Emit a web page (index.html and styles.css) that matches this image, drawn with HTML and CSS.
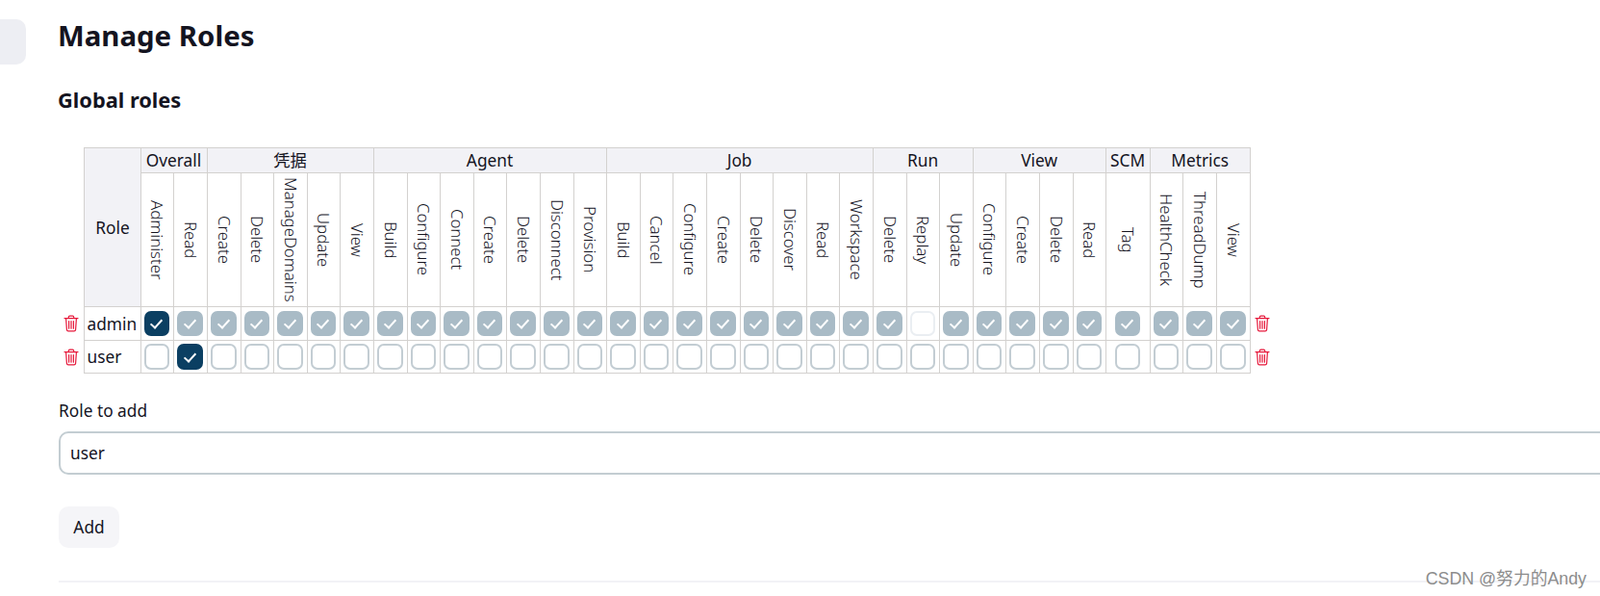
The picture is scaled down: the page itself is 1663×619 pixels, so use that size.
FILE: index.html
```html
<!DOCTYPE html>
<html lang="en">
<head>
<meta charset="utf-8">
<title>Manage Roles</title>
<link rel="stylesheet" href="styles.css">
</head>
<body>
<div class="page">
  <aside class="side"><div class="side-item"></div></aside>
  <main class="main">
    <h1 class="title">Manage Roles</h1>
    <h2 class="sub">Global roles</h2>
    <svg width="0" height="0" class="defs"><defs>
      <symbol id="trash" viewBox="0 0 16 18"><path d="M1 3.6h14M5.3 3.4V2.3c0-.7.5-1.2 1.2-1.2h3c.7 0 1.2.5 1.2 1.2v1.1M2.6 3.8l.8 11.6c.1.9.7 1.5 1.6 1.5h6c.9 0 1.5-.6 1.6-1.5l.8-11.6M5.6 6.6v7.6M8 6.6v7.6M10.4 6.6v7.6" fill="none" stroke="currentColor" stroke-width="1.2" stroke-linecap="round" stroke-linejoin="round"/></symbol>
    </defs></svg>
    <table class="roles">
      <colgroup>
        <col class="c-del"><col class="c-role">
        <col class="a"><col class="b">
        <col class="b"><col class="a"><col class="b"><col class="a"><col class="b">
        <col class="b"><col class="a"><col class="b"><col class="a"><col class="b"><col class="b"><col class="a">
        <col class="b"><col class="a"><col class="b"><col class="b"><col class="a"><col class="b"><col class="a"><col class="b">
        <col class="b"><col class="a"><col class="b">
        <col class="a"><col class="b"><col class="b"><col class="a">
        <col class="c-scm">
        <col class="a"><col class="b"><col class="b">
        <col class="c-del">
      </colgroup>
      <thead>
        <tr class="r-group">
          <td class="none" rowspan="2"></td>
          <th class="role-h" rowspan="2">Role</th>
          <th colspan="2">Overall</th><th colspan="5">凭据</th><th colspan="7">Agent</th><th colspan="8">Job</th><th colspan="3">Run</th><th colspan="4">View</th><th>SCM</th><th colspan="3">Metrics</th>
          <td class="none" rowspan="2"></td>
        </tr>
        <tr class="r-perm">
          <td><span class="v">Administer</span></td><td><span class="v">Read</span></td>
          <td><span class="v">Create</span></td><td><span class="v">Delete</span></td><td><span class="v">ManageDomains</span></td><td><span class="v">Update</span></td><td><span class="v">View</span></td>
          <td><span class="v">Build</span></td><td><span class="v">Configure</span></td><td><span class="v">Connect</span></td><td><span class="v">Create</span></td><td><span class="v">Delete</span></td><td><span class="v">Disconnect</span></td><td><span class="v">Provision</span></td>
          <td><span class="v">Build</span></td><td><span class="v">Cancel</span></td><td><span class="v">Configure</span></td><td><span class="v">Create</span></td><td><span class="v">Delete</span></td><td><span class="v">Discover</span></td><td><span class="v">Read</span></td><td><span class="v">Workspace</span></td>
          <td><span class="v">Delete</span></td><td><span class="v">Replay</span></td><td><span class="v">Update</span></td>
          <td><span class="v">Configure</span></td><td><span class="v">Create</span></td><td><span class="v">Delete</span></td><td><span class="v">Read</span></td>
          <td><span class="v">Tag</span></td>
          <td><span class="v">HealthCheck</span></td><td><span class="v">ThreadDump</span></td><td><span class="v">View</span></td>
        </tr>
      </thead>
      <tbody>
        <tr class="r-a">
          <td class="none del"><svg class="ico"><use href="#trash"/></svg></td>
          <td class="name">admin</td>
          <td><i class="cb on"></i></td><td><i class="cb dis"></i></td>
          <td><i class="cb dis"></i></td><td><i class="cb dis"></i></td><td><i class="cb dis"></i></td><td><i class="cb dis"></i></td><td><i class="cb dis"></i></td>
          <td><i class="cb dis"></i></td><td><i class="cb dis"></i></td><td><i class="cb dis"></i></td><td><i class="cb dis"></i></td><td><i class="cb dis"></i></td><td><i class="cb dis"></i></td><td><i class="cb dis"></i></td>
          <td><i class="cb dis"></i></td><td><i class="cb dis"></i></td><td><i class="cb dis"></i></td><td><i class="cb dis"></i></td><td><i class="cb dis"></i></td><td><i class="cb dis"></i></td><td><i class="cb dis"></i></td><td><i class="cb dis"></i></td>
          <td><i class="cb dis"></i></td><td><i class="cb off"></i></td><td><i class="cb dis"></i></td>
          <td><i class="cb dis"></i></td><td><i class="cb dis"></i></td><td><i class="cb dis"></i></td><td><i class="cb dis"></i></td>
          <td><i class="cb dis"></i></td>
          <td><i class="cb dis"></i></td><td><i class="cb dis"></i></td><td><i class="cb dis"></i></td>
          <td class="none del"><svg class="ico"><use href="#trash"/></svg></td>
        </tr>
        <tr class="r-b">
          <td class="none del"><svg class="ico"><use href="#trash"/></svg></td>
          <td class="name">user</td>
          <td><i class="cb"></i></td><td><i class="cb on"></i></td>
          <td><i class="cb"></i></td><td><i class="cb"></i></td><td><i class="cb"></i></td><td><i class="cb"></i></td><td><i class="cb"></i></td>
          <td><i class="cb"></i></td><td><i class="cb"></i></td><td><i class="cb"></i></td><td><i class="cb"></i></td><td><i class="cb"></i></td><td><i class="cb"></i></td><td><i class="cb"></i></td>
          <td><i class="cb"></i></td><td><i class="cb"></i></td><td><i class="cb"></i></td><td><i class="cb"></i></td><td><i class="cb"></i></td><td><i class="cb"></i></td><td><i class="cb"></i></td><td><i class="cb"></i></td>
          <td><i class="cb"></i></td><td><i class="cb"></i></td><td><i class="cb"></i></td>
          <td><i class="cb"></i></td><td><i class="cb"></i></td><td><i class="cb"></i></td><td><i class="cb"></i></td>
          <td><i class="cb"></i></td>
          <td><i class="cb"></i></td><td><i class="cb"></i></td><td><i class="cb"></i></td>
          <td class="none del"><svg class="ico"><use href="#trash"/></svg></td>
        </tr>
      </tbody>
    </table>
    <label class="lbl" for="role">Role to add</label>
    <input class="inp" id="role" type="text" value="user">
    <button class="btn" type="button">Add</button>
    <hr class="rule">
  </main>
</div>
<div class="mark">CSDN @努力的Andy</div>
</body>
</html>
```
FILE: styles.css
```css
html, body { margin: 0; padding: 0; height: 619px; overflow: hidden; background: #fff; }
body { font-family: "Noto Sans", "Noto Sans CJK SC", sans-serif; color: #14141f; font-size: 17.3px; }
.page { display: flex; align-items: flex-start; width: 1663px; overflow: hidden; }
.side { width: 27px; flex: none; padding-top: 20px; }
.side-item { height: 47px; background: #edeef3; border-radius: 0 10px 10px 0; }
.main { margin-left: 34px; width: 1700px; flex: none; }
.title { margin: 16px 0 0 -1px; font-size: 29.4px; line-height: 42px; font-weight: 700; }
.sub { margin: 31px 0 0 -1px; font-size: 21.8px; line-height: 30px; font-weight: 700; }
.defs { position: absolute; }
.roles { margin-top: 34px; border-collapse: collapse; table-layout: fixed; width: 1264px; }
.c-del { width: 26px; }
.c-role { width: 59px; }
.a { width: 34px; }
.b { width: 35px; }
.c-scm { width: 46px; }
.roles th, .roles td { border: 1px solid #d3d1cf; padding: 0; text-align: center; vertical-align: middle; }
.roles th { background: #f2f2f6; font-weight: 400; }
.roles .none { border: 0; background: transparent; }
.r-group { height: 26px; line-height: 24px; }
.r-perm { height: 139px; }
.r-a { height: 35px; }
.r-b { height: 34px; }
.role-h { padding-top: 2px !important; padding-left: 1px !important; }
.v { writing-mode: vertical-rl; display: inline-block; font-weight: 300; font-size: 16.8px; line-height: 20px; white-space: nowrap; vertical-align: middle; color: #14141f; }
.name { text-align: left !important; padding-left: 3px !important; white-space: nowrap; }
.del { color: #e6193b; text-align: center; }
.ico { width: 16px; height: 18px; display: block; margin: 0 auto; }
.cb { display: block; box-sizing: border-box; width: 26.67px; height: 26.67px; margin: 0 auto; border: 2px solid #c3cdd3; border-radius: 7px; position: relative; }
.cb.on { background: #0b3f62; border-color: #0b3f62; }
.cb.dis { background: #a9bbc6; border-color: #a9bbc6; }
.cb.off { border-color: #eaeef2; }
.cb.on::after, .cb.dis::after { content: ""; position: absolute; left: 7.5px; top: 4.5px; width: 5px; height: 10px; border: solid #fff; border-width: 0 2.2px 2.2px 0; transform: rotate(42deg); }
.lbl { display: block; margin-top: 27px; line-height: 24px; }
.inp { display: block; box-sizing: border-box; width: 1700px; height: 45px; margin-top: 9px; padding: 0 10px; border: 2px solid #c3cdd2; border-radius: 10px; font: inherit; color: inherit; outline: 0; background: #fff; }
.btn { display: block; margin-top: 33px; width: 63px; height: 43px; border: 0; border-radius: 10px; background: #f5f5f8; font: inherit; color: inherit; padding: 0; }
.rule { margin: 34px 0 0; border: 0; height: 2px; background: #f2f2f6; }
.mark { position: absolute; right: 14px; top: 590px; color: #8c8c8c; font-size: 17.8px; font-family: "Liberation Sans", "Noto Sans CJK SC", sans-serif; font-weight: 400; line-height: 22px; }
```
